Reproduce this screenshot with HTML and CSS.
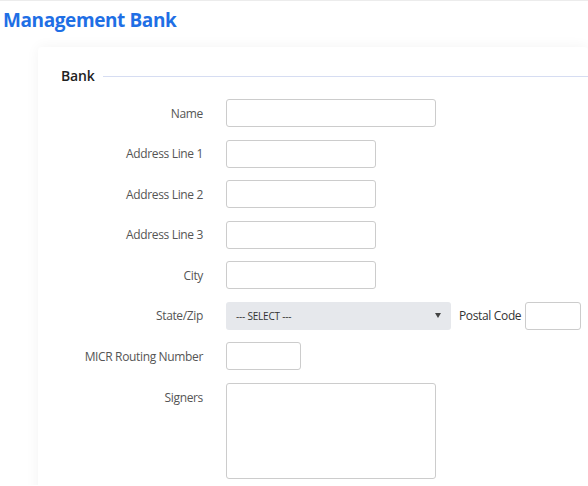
FILE: index.html
```html
<!DOCTYPE html>
<html>
<head>
  <meta charset="UTF-8">
  <title>Management Bank</title>
  <meta name="viewport" content="width=device-width, initial-scale=1.0">
  <link rel="stylesheet" href="styles.css">
</head>
<body>
  <div class="page">
    <h1 class="page-title">Management Bank</h1>
    <div class="card">
      <div class="legend">
        <span>Bank</span>
        <div class="legend-line"></div>
      </div>
      <form class="bank-form">
        <div class="form-row">
          <label class="form-label">Name</label>
          <input type="text" class="input input-wide">
        </div>
        <div class="form-row">
          <label class="form-label">Address Line 1</label>
          <input type="text" class="input input-mid">
        </div>
        <div class="form-row">
          <label class="form-label">Address Line 2</label>
          <input type="text" class="input input-mid">
        </div>
        <div class="form-row">
          <label class="form-label">Address Line 3</label>
          <input type="text" class="input input-mid">
        </div>
        <div class="form-row">
          <label class="form-label">City</label>
          <input type="text" class="input input-mid">
        </div>
        <div class="form-row">
          <label class="form-label">State/Zip</label>
          <div class="select">
            <span>--- SELECT ---</span>
            <span class="select-arrow"></span>
          </div>
          <label class="inline-label">Postal Code</label>
          <input type="text" class="input input-postal">
        </div>
        <div class="form-row">
          <label class="form-label">MICR Routing Number</label>
          <input type="text" class="input input-short">
        </div>
        <div class="form-row form-row-top">
          <label class="form-label">Signers</label>
          <textarea class="input input-area"></textarea>
        </div>
      </form>
    </div>
  </div>
</body>
</html>
```

FILE: styles.css
```css
body { font-family: "Open Sans", "Noto Sans", sans-serif; margin: 0; padding: 0; background-color: #fff; color: #333; overflow: hidden; }
.page { border-top: 1px solid #ececec; height: 485px; overflow: hidden; box-sizing: border-box; }
.page-title {
  color: #1f6fe5;
  font-size: 19px;
  font-weight: 700;
  margin: 6px 0 0 3px;
  line-height: 26px;
  letter-spacing: -0.4px;
}
.card {
  margin: 14px 0 0 38px;
  background: #fff;
  border-radius: 4px;
  box-shadow: 0 0 14px rgba(0,0,0,0.05);
  padding: 19px 0 10px 23px;
  height: 430px;
}
.legend {
  display: flex;
  align-items: center;
  font-size: 14px;
  font-weight: 600;
  color: #222;
  letter-spacing: -0.2px;
}
.legend-line { flex: 1; height: 1px; background: #d6ddf2; margin-left: 9px; margin-top: 2px; }
.bank-form { margin-top: 14px; }
.form-row {
  display: flex;
  align-items: center;
  margin-bottom: 12.5px;
}
.form-row-top { align-items: flex-start; }
.form-row-top .form-label { padding-top: 6px; }
.form-label {
  width: 142px;
  margin-right: 23px;
  text-align: right;
  font-size: 12px;
  letter-spacing: -0.35px;
  color: #555;
  flex-shrink: 0;
}
.input {
  box-sizing: border-box;
  height: 28px;
  border: 1px solid #ccc;
  border-radius: 3px;
  background: #fff;
  font-family: inherit;
  margin: 0;
  padding: 0 6px;
}
.input-wide { width: 210px; }
.input-mid { width: 150px; }
.input-short { width: 75px; }
.input-postal { width: 56px; }
.input-area { width: 210px; height: 96px; resize: none; }
.select {
  box-sizing: border-box;
  width: 225px;
  height: 28px;
  background: #e6e8ec;
  border-radius: 3px;
  display: flex;
  align-items: center;
  justify-content: space-between;
  padding: 0 10px 0 10px;
  font-size: 10px;
  letter-spacing: -0.2px;
  color: #333;
}
.select-arrow {
  width: 0;
  height: 0;
  border-left: 3.5px solid transparent;
  border-right: 3.5px solid transparent;
  border-top: 5px solid #444;
}
.inline-label {
  font-size: 12px;
  letter-spacing: -0.35px;
  color: #333;
  margin: 0 4px 0 8px;
}
```
